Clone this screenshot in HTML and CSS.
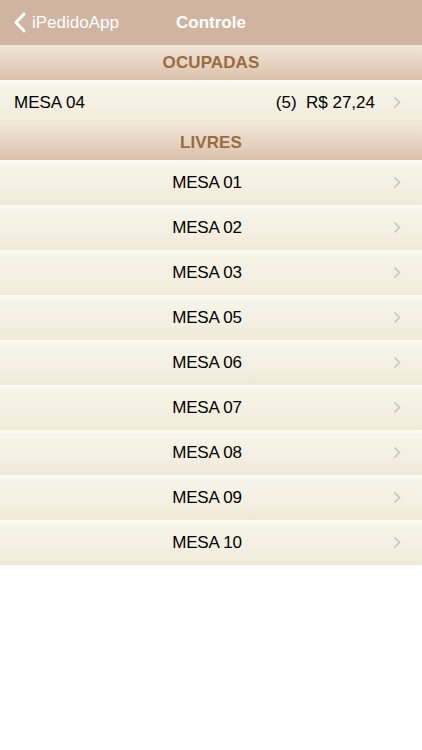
FILE: index.html
```html
<!DOCTYPE html>
<html lang="pt">
<head>
    <meta charset="UTF-8">
    <meta name="viewport" content="width=device-width, initial-scale=1.0">
    <title>Controle</title>
    <link rel="stylesheet" href="styles.css">
</head>
<body>
    <div class="nav-bar">
        <div class="nav-back">
            <svg class="back-icon" width="13" height="21" viewBox="0 0 13 21"><path d="M11 2 L3 10.5 L11 19" fill="none" stroke="white" stroke-width="3" stroke-linecap="round" stroke-linejoin="round"/></svg>
            <span>iPedidoApp</span>
        </div>
        <div class="nav-title">Controle</div>
    </div>

    <div class="section-header">OCUPADAS</div>
    <div class="row row-left">
        <span class="row-name">MESA 04</span>
        <span class="row-detail">(5)&nbsp; R$ 27,24</span>
        <span class="chevron"><svg width="8" height="13" viewBox="0 0 8 13"><path d="M1.5 1.5 L6.5 6.5 L1.5 11.5" fill="none" stroke="#c4c4c4" stroke-width="1.6"/></svg></span>
    </div>

    <div class="section-header">LIVRES</div>
    <div class="row"><span class="row-name">MESA 01</span><span class="chevron"><svg width="8" height="13" viewBox="0 0 8 13"><path d="M1.5 1.5 L6.5 6.5 L1.5 11.5" fill="none" stroke="#c4c4c4" stroke-width="1.6"/></svg></span></div>
    <div class="row"><span class="row-name">MESA 02</span><span class="chevron"><svg width="8" height="13" viewBox="0 0 8 13"><path d="M1.5 1.5 L6.5 6.5 L1.5 11.5" fill="none" stroke="#c4c4c4" stroke-width="1.6"/></svg></span></div>
    <div class="row"><span class="row-name">MESA 03</span><span class="chevron"><svg width="8" height="13" viewBox="0 0 8 13"><path d="M1.5 1.5 L6.5 6.5 L1.5 11.5" fill="none" stroke="#c4c4c4" stroke-width="1.6"/></svg></span></div>
    <div class="row"><span class="row-name">MESA 05</span><span class="chevron"><svg width="8" height="13" viewBox="0 0 8 13"><path d="M1.5 1.5 L6.5 6.5 L1.5 11.5" fill="none" stroke="#c4c4c4" stroke-width="1.6"/></svg></span></div>
    <div class="row"><span class="row-name">MESA 06</span><span class="chevron"><svg width="8" height="13" viewBox="0 0 8 13"><path d="M1.5 1.5 L6.5 6.5 L1.5 11.5" fill="none" stroke="#c4c4c4" stroke-width="1.6"/></svg></span></div>
    <div class="row"><span class="row-name">MESA 07</span><span class="chevron"><svg width="8" height="13" viewBox="0 0 8 13"><path d="M1.5 1.5 L6.5 6.5 L1.5 11.5" fill="none" stroke="#c4c4c4" stroke-width="1.6"/></svg></span></div>
    <div class="row"><span class="row-name">MESA 08</span><span class="chevron"><svg width="8" height="13" viewBox="0 0 8 13"><path d="M1.5 1.5 L6.5 6.5 L1.5 11.5" fill="none" stroke="#c4c4c4" stroke-width="1.6"/></svg></span></div>
    <div class="row"><span class="row-name">MESA 09</span><span class="chevron"><svg width="8" height="13" viewBox="0 0 8 13"><path d="M1.5 1.5 L6.5 6.5 L1.5 11.5" fill="none" stroke="#c4c4c4" stroke-width="1.6"/></svg></span></div>
    <div class="row"><span class="row-name">MESA 10</span><span class="chevron"><svg width="8" height="13" viewBox="0 0 8 13"><path d="M1.5 1.5 L6.5 6.5 L1.5 11.5" fill="none" stroke="#c4c4c4" stroke-width="1.6"/></svg></span></div>
</body>
</html>
```

FILE: styles.css
```css
body {
    margin: 0;
    padding: 0;
    background: white;
    font-family: 'Liberation Sans', Arial, sans-serif;
    font-size: 17px;
    color: black;
}
.nav-bar {
    height: 45px;
    background-color: #cfb4a2;
    color: white;
    display: grid;
    grid-template-columns: 1fr auto 1fr;
    align-items: center;
}
.nav-back {
    display: flex;
    align-items: center;
    gap: 6px;
    padding-left: 13px;
    font-size: 17px;
}
.back-icon {
    display: block;
}
.nav-title {
    grid-column: 2;
    font-weight: bold;
    font-size: 17px;
}
.section-header {
    height: 35px;
    display: flex;
    justify-content: center;
    align-items: center;
    padding-top: 1px;
    box-sizing: border-box;
    background: linear-gradient(to bottom, #efe5d7 0%, #e7d6c5 45%, #dbc0ab 100%);
    color: #9b6b40;
    font-weight: bold;
    font-size: 17px;
    letter-spacing: 0.1px;
}
.row {
    height: 45px;
    position: relative;
    display: flex;
    justify-content: center;
    align-items: center;
    padding-right: 8px;
    padding-top: 1px;
    box-sizing: border-box;
    background: linear-gradient(to bottom, #fcfbf6 0px, #f6f3e8 6px, #f3efe2 60%, #efe9d7 100%);
    letter-spacing: -0.2px;
}
.row-left {
    justify-content: flex-start;
    padding-left: 14px;
    padding-right: 0;
    letter-spacing: 0;
}
.row-detail {
    margin-left: auto;
    margin-right: 47px;
}
.chevron {
    position: absolute;
    right: 21px;
    top: 16px;
    line-height: 0;
}
```
